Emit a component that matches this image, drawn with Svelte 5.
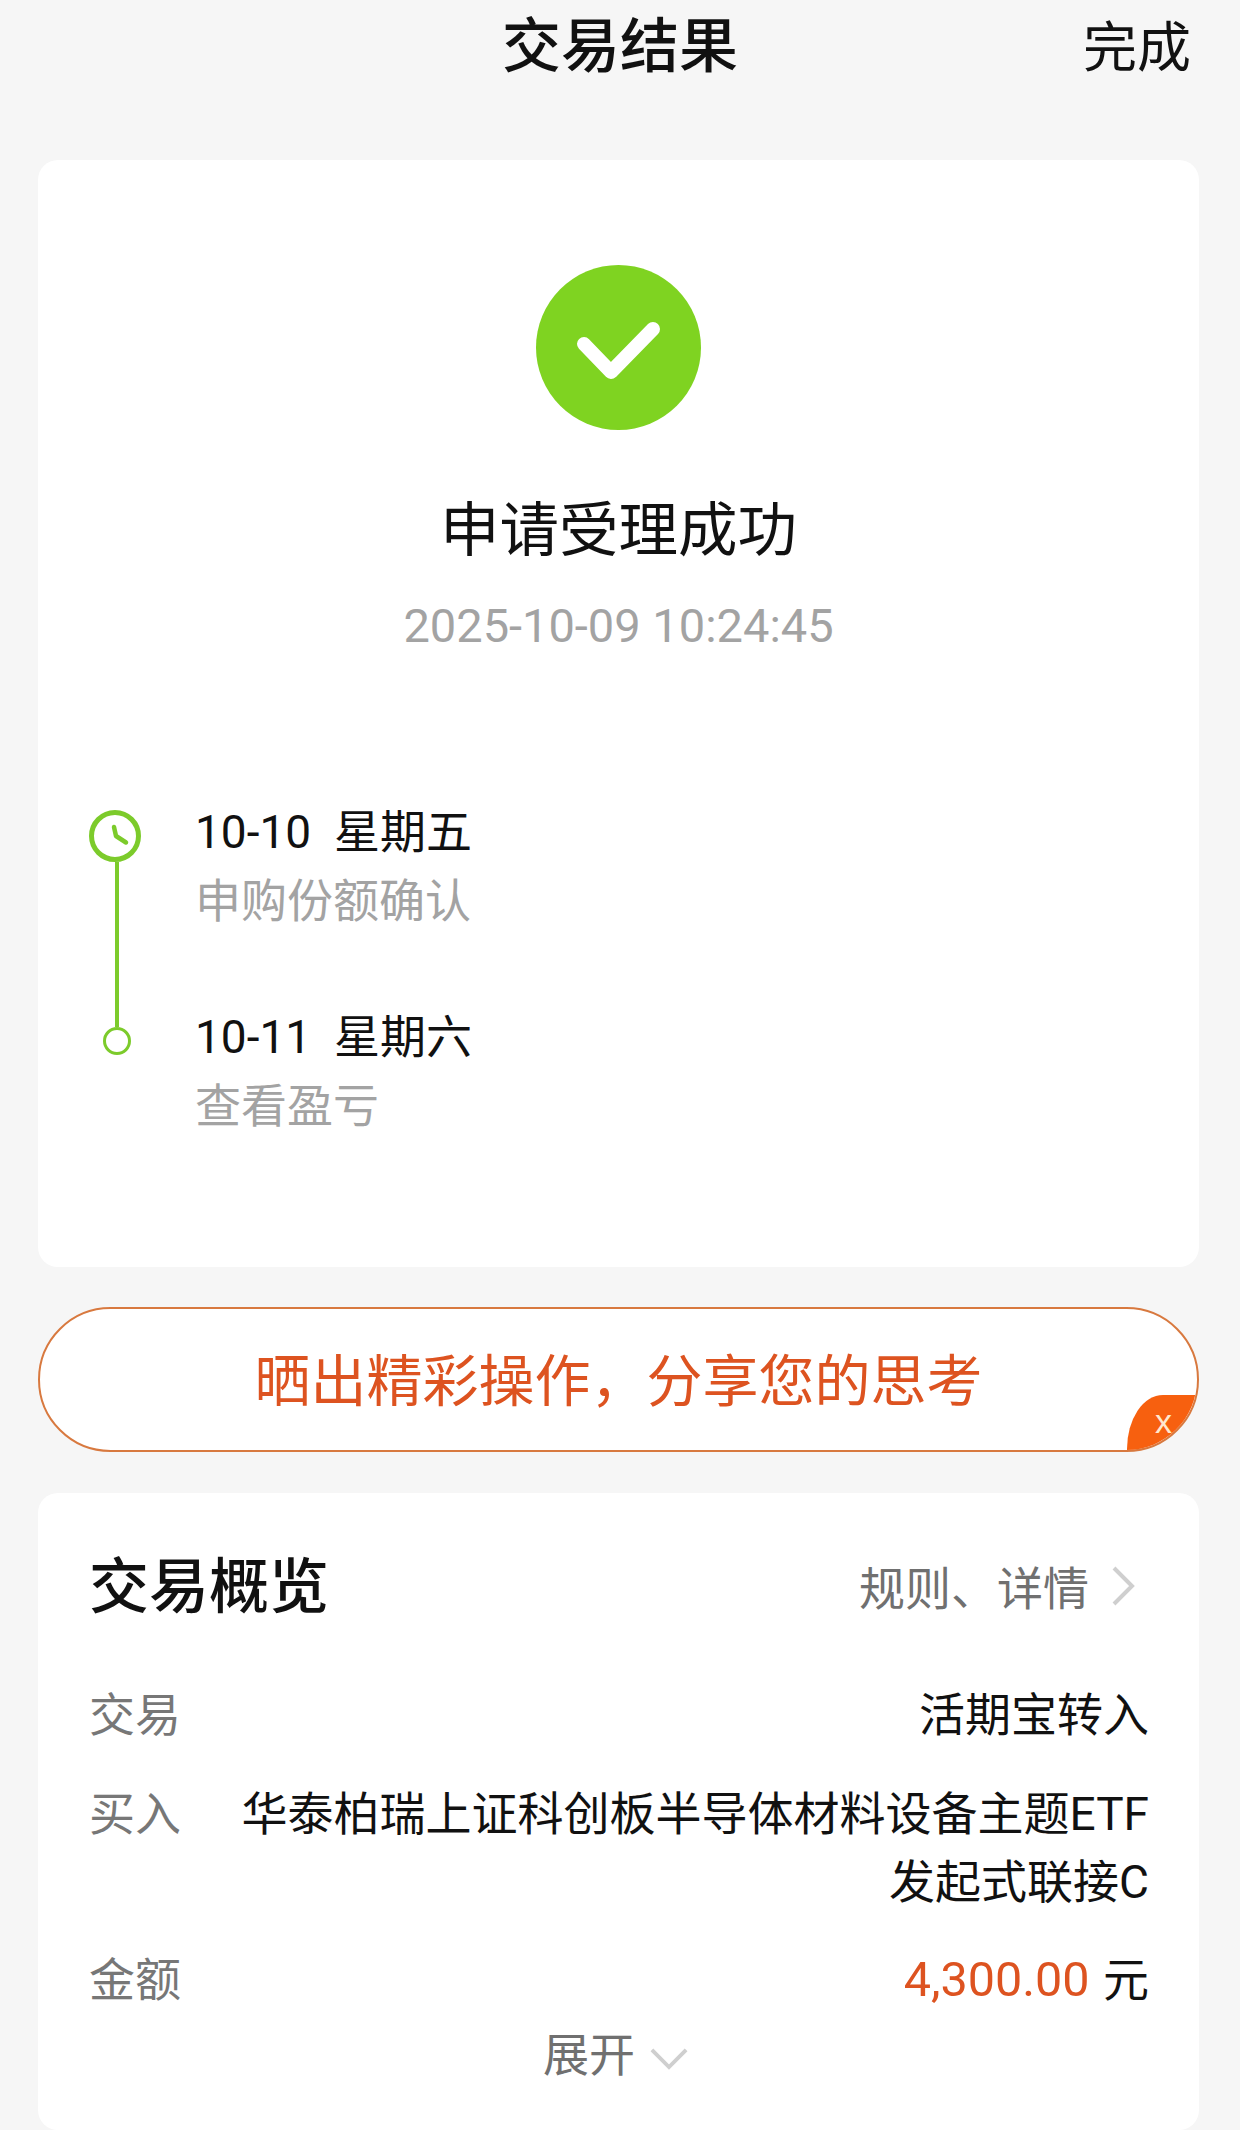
<script>
  const timeline = [
    { date: '10-10  星期五', note: '申购份额确认' },
    { date: '10-11  星期六', note: '查看盈亏' }
  ];
</script>

<div class="page">
  <header class="topbar">
    <span></span>
    <h1>交易结果</h1>
    <span class="done">完成</span>
  </header>

  <section class="card result">
    <svg class="ok" viewBox="0 0 165 165" aria-hidden="true">
      <circle cx="82.5" cy="82.5" r="82.5" fill="#7fd321" />
      <path d="M48 79 L75 107 L117 64" fill="none" stroke="#fff" stroke-width="14" stroke-linecap="round" stroke-linejoin="round" />
    </svg>
    <h2>申请受理成功</h2>
    <p class="stamp">2025-10-09 10:24:45</p>

    <div class="timeline">
      <div class="rail">
        <svg class="clock" viewBox="0 0 52 52" aria-hidden="true">
          <circle cx="26" cy="26" r="23.5" fill="none" stroke="#7ccb2b" stroke-width="5" />
          <path d="M25 17 L27 26 L37 32.5" fill="none" stroke="#7ccb2b" stroke-width="4.5" stroke-linecap="round" stroke-linejoin="round" />
        </svg>
        <div class="line"></div>
        <div class="dot"></div>
      </div>
      <div class="steps">
        {#each timeline as step}
          <div class="step">
            <div class="date">{step.date}</div>
            <div class="note">{step.note}</div>
          </div>
        {/each}
      </div>
    </div>
  </section>

  <div class="share">
    <span>晒出精彩操作，分享您的思考</span>
    <div class="close">x</div>
  </div>

  <section class="card overview">
    <div class="head">
      <h3>交易概览</h3>
      <div class="rules">
        <span>规则、详情</span>
        <svg viewBox="0 0 24 40" aria-hidden="true">
          <path d="M3 2 L21 20 L3 38" fill="none" stroke="#cfcfcf" stroke-width="4" />
        </svg>
      </div>
    </div>

    <div class="row first">
      <span class="label">交易</span>
      <span class="value">活期宝转入</span>
    </div>
    <div class="row">
      <span class="label">买入</span>
      <span class="value">华泰柏瑞上证科创板半导体材料设备主题ETF<br />发起式联接C</span>
    </div>
    <div class="row amount">
      <span class="label">金额</span>
      <span class="value"><em>4,300.00</em> 元</span>
    </div>

    <div class="more">
      <span>展开</span>
      <svg viewBox="0 0 40 24" aria-hidden="true">
        <path d="M2 3 L20 21 L38 3" fill="none" stroke="#cfcfcf" stroke-width="4" />
      </svg>
    </div>
  </section>
</div>

<style>
  :global(body) {
    background: #f6f6f6;
  }

  .page {
    height: 2130px;
    overflow: hidden;
    background: #f6f6f6;
    font-family: Roboto, "Noto Sans CJK SC", sans-serif;
    color: #111;
  }

  h1, h2, h3, p {
    margin: 0;
    font-weight: 400;
  }

  .topbar {
    height: 92px;
    display: grid;
    grid-template-columns: 1fr auto 1fr;
    align-items: center;
    padding: 0 49px;
    margin-bottom: 68px;
  }

  .topbar h1 {
    font-size: 59px;
    font-weight: 500;
    line-height: 94px;
  }

  .done {
    justify-self: end;
    font-size: 54px;
    margin-top: -7px;
  }

  .card {
    width: 1161px;
    margin-left: 38px;
    background: #fff;
    border-radius: 20px;
  }

  .result {
    height: 1107px;
    padding-top: 105px;
    box-sizing: border-box;
    display: flex;
    flex-direction: column;
    align-items: center;
  }

  .ok {
    width: 165px;
    height: 165px;
    display: block;
  }

  .result h2 {
    margin-top: 61px;
    font-size: 59.5px;
    line-height: 80px;
  }

  .stamp {
    margin-top: 25px;
    font-size: 47px;
    line-height: 60px;
    color: #a3a3a3;
  }

  .timeline {
    align-self: stretch;
    display: flex;
    margin-top: 142px;
    padding-left: 51px;
  }

  .rail {
    width: 56px;
    margin-top: 12px;
    display: flex;
    flex-direction: column;
    align-items: center;
  }

  .clock {
    width: 52px;
    height: 52px;
    align-self: flex-start;
    display: block;
  }

  .line {
    width: 4px;
    height: 165px;
    background: #7ccb2b;
  }

  .dot {
    width: 28px;
    height: 28px;
    box-sizing: border-box;
    border: 3.5px solid #7ccb2b;
    border-radius: 50%;
  }

  .steps {
    margin-left: 50px;
  }

  .step + .step {
    margin-top: 67px;
  }

  .date, .note {
    font-size: 46px;
    line-height: 69px;
    white-space: pre;
  }

  .note {
    color: #a3a3a3;
  }

  .share {
    position: relative;
    width: 1161px;
    height: 145px;
    margin: 40px 0 41px 38px;
    padding-bottom: 6px;
    box-sizing: border-box;
    display: flex;
    align-items: center;
    justify-content: center;
    overflow: hidden;
    background: #fff;
    border: 2px solid #d8793f;
    border-radius: 73px;
    color: #dd5320;
    font-size: 56px;
  }

  .close {
    position: absolute;
    right: 0;
    bottom: 0;
    width: 70px;
    height: 55px;
    padding: 0 0 3px 3px;
    box-sizing: border-box;
    display: flex;
    align-items: center;
    justify-content: center;
    background: #f7600f;
    border-top-left-radius: 36px 54px;
    color: #ffe9cf;
    font-family: "Liberation Sans", sans-serif;
    font-size: 34px;
    line-height: 1;
  }

  .overview {
    height: 637px;
    padding: 60px 50px 0 51px;
    box-sizing: border-box;
  }

  .head {
    display: flex;
    justify-content: space-between;
    align-items: center;
  }

  .head h3 {
    font-size: 60px;
    font-weight: 500;
    line-height: 70px;
  }

  .rules {
    display: flex;
    align-items: center;
    margin-right: 14px;
    margin-top: -6px;
    font-size: 46px;
    color: #707070;
  }

  .rules svg {
    width: 24px;
    height: 40px;
    margin-left: 22px;
    margin-top: 2px;
  }

  .row {
    display: flex;
    justify-content: space-between;
    margin-top: 31px;
    font-size: 46px;
    line-height: 68px;
  }

  .row.first {
    margin-top: 58px;
  }

  .row.amount {
    margin-top: 30px;
  }

  .label {
    color: #777;
  }

  .value {
    text-align: right;
  }

  .value em {
    font-style: normal;
    font-size: 48.5px;
    color: #dd5320;
    margin-right: 2px;
  }

  .more {
    margin-top: 11px;
    padding-right: 7px;
    display: flex;
    justify-content: center;
    align-items: center;
    font-size: 46px;
    line-height: 60px;
    color: #707070;
  }

  .more svg {
    width: 38px;
    height: 23px;
    margin-left: 15px;
    margin-top: 6px;
  }
</style>
